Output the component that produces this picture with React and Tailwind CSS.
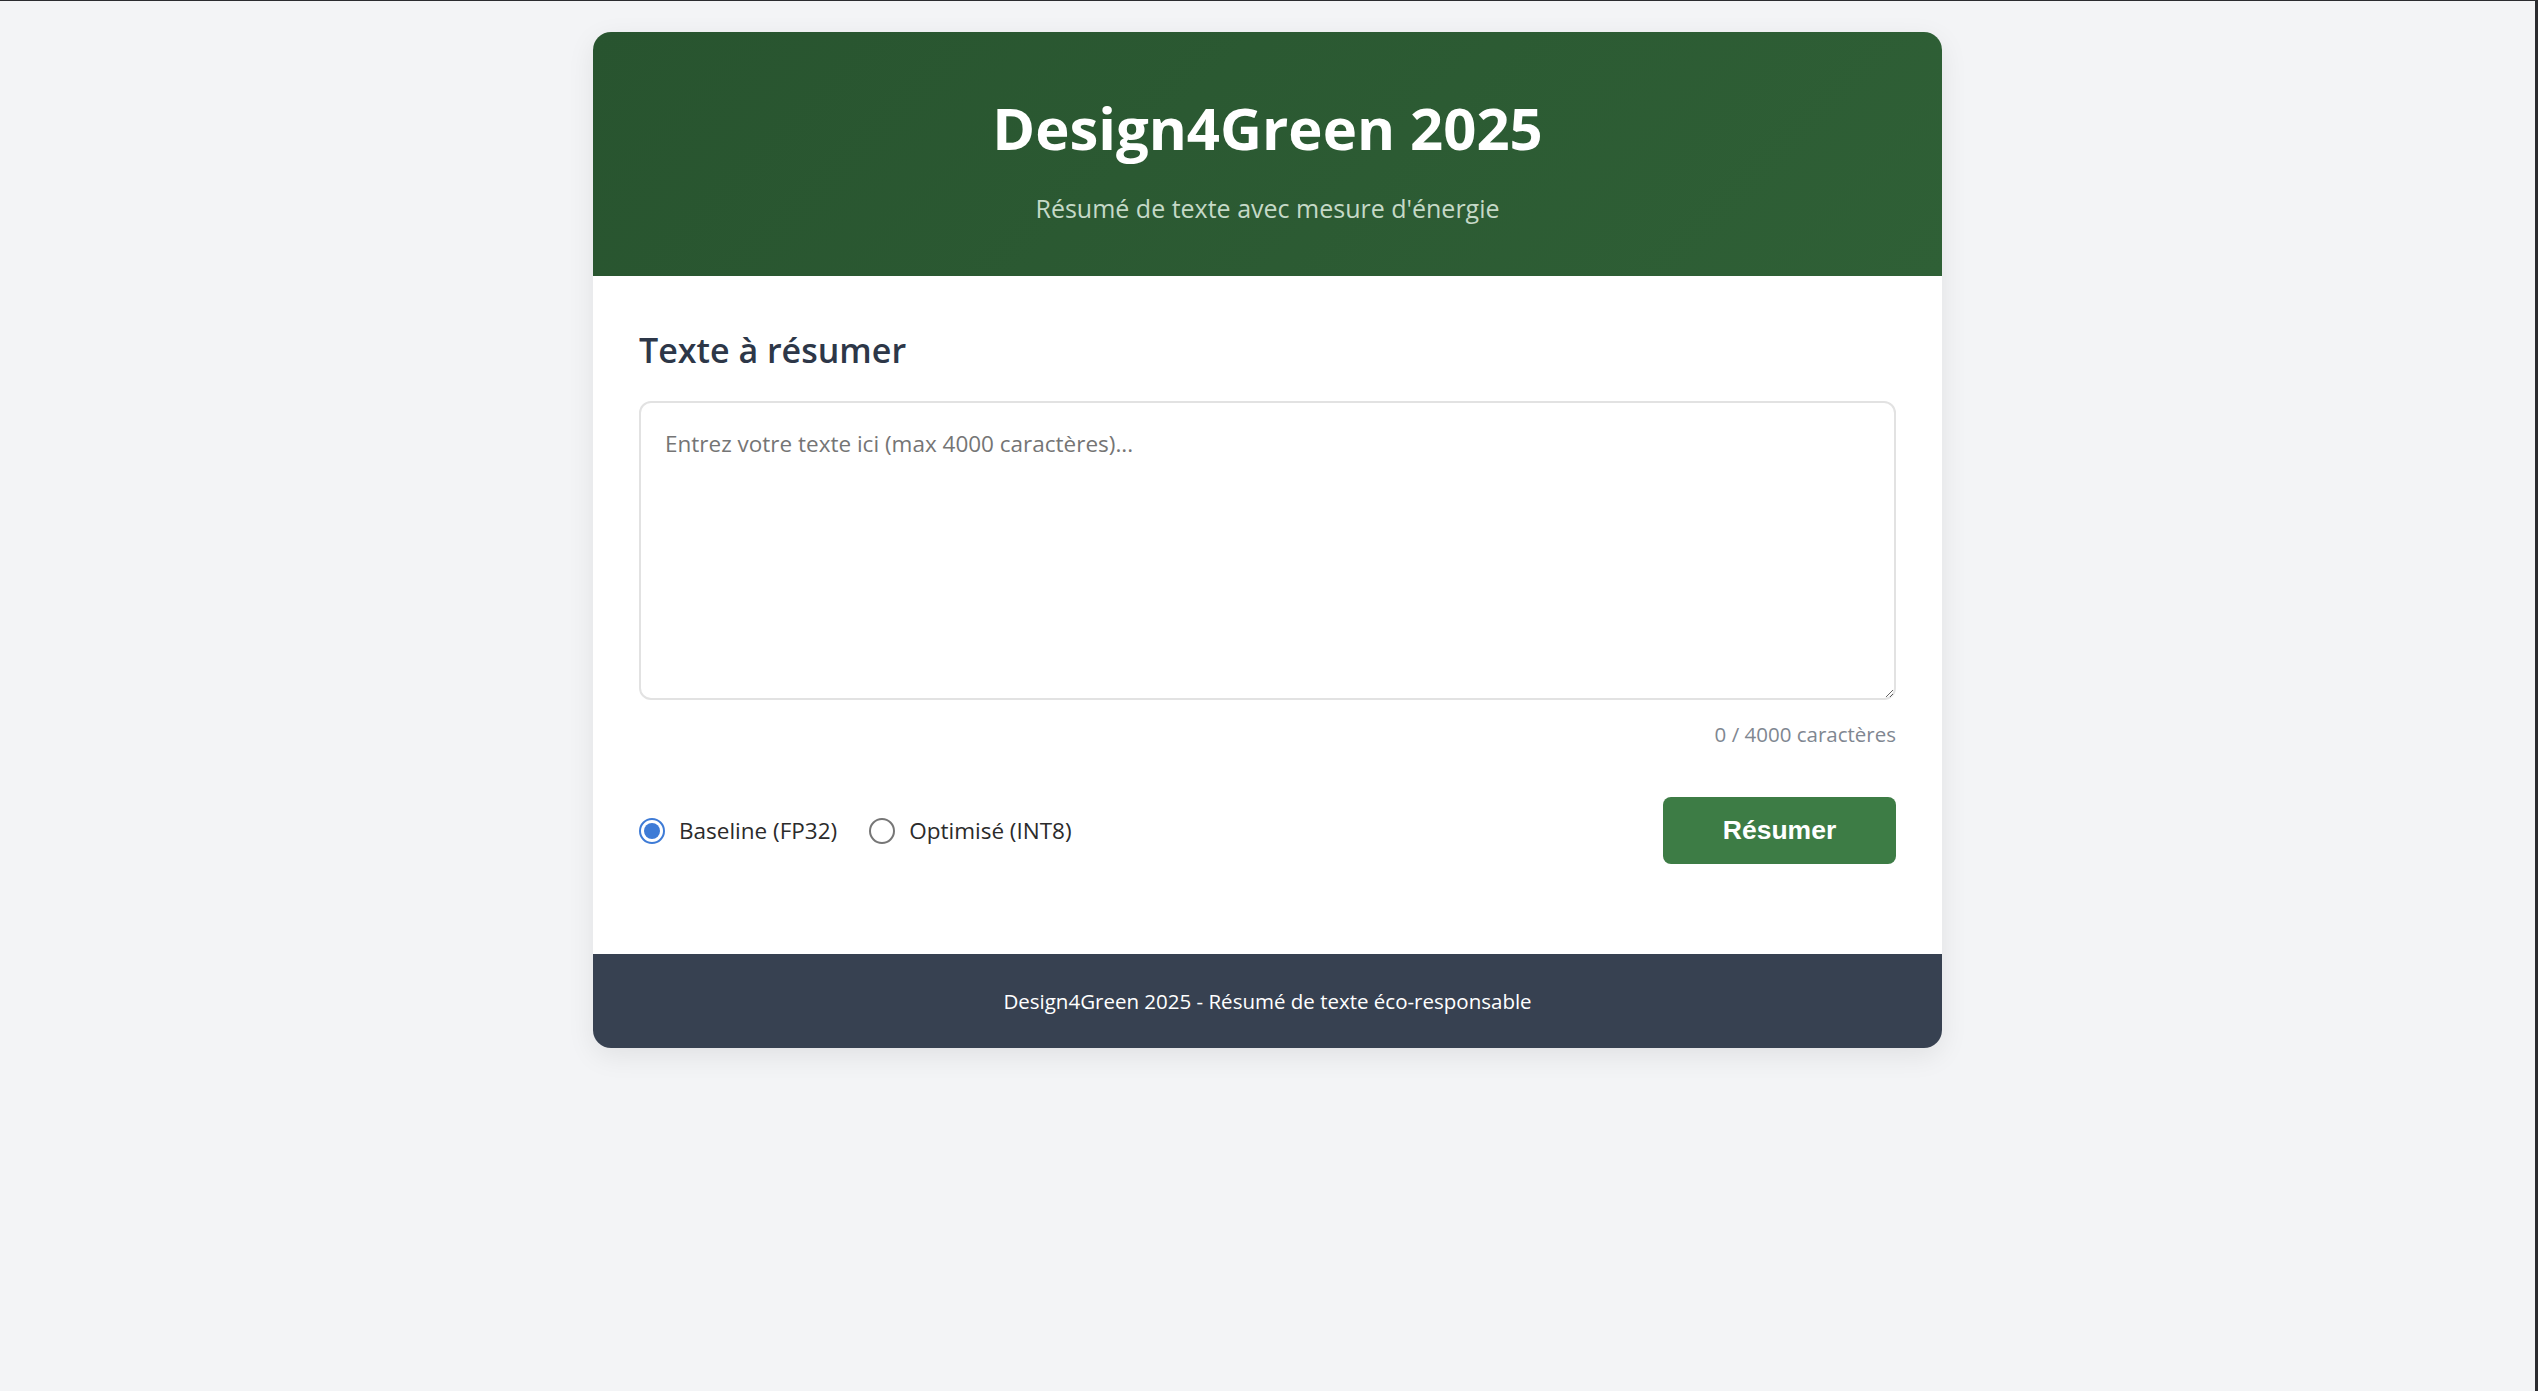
export default function App() {
  return (
    <div className="min-h-screen bg-[#f3f4f6] border-t border-r-[3px] border-[#2b2c30] font-['Open_Sans',sans-serif]">
      <div className="pt-[31px] pb-[40px]">
        <div className="mx-auto w-[1349px] rounded-[18px] bg-white shadow-[0_8px_28px_rgba(0,0,0,0.08)] overflow-hidden">
          <header className="bg-[linear-gradient(135deg,#28542f,#2f6036)] text-center pt-[60px] pb-[49px]">
            <h1 className="text-[58px] leading-[72px] font-bold text-white">Design4Green 2025</h1>
            <p className="mt-[26px] text-[25px] leading-[37px] text-[#c5d9c7]">Résumé de texte avec mesure d'énergie</p>
          </header>
          <main className="px-[46px] pt-[53px] pb-[90px]">
            <h2 className="text-[34px] leading-[43px] font-semibold text-[#2d3748]">Texte à résumer</h2>
            <textarea
              className="mt-[29px] block w-full h-[299px] rounded-[12px] border-2 border-[#e2e2e2] px-[24px] pt-[23px] pb-[20px] text-[22.5px] leading-[36px] text-[#333] placeholder:text-[#757575] resize-y outline-none"
              placeholder="Entrez votre texte ici (max 4000 caractères)..."
            />
            <div className="mt-[18px] text-right text-[20.5px] leading-[32px] text-[#7f8791]">0 / 4000 caractères</div>
            <div className="mt-[47px] flex items-center justify-between">
              <div className="flex items-center gap-[32px] text-[22.5px] text-[#2b2b2b]">
                <label className="flex items-center gap-[14px]">
                  <span className="flex items-center justify-center w-[26px] h-[26px] rounded-full border-2 border-[#3e7bd6] bg-white">
                    <span className="w-[16px] h-[16px] rounded-full bg-[#3e7bd6]" />
                  </span>
                  <span>Baseline (FP32)</span>
                </label>
                <label className="flex items-center gap-[14px]">
                  <span className="w-[26px] h-[26px] rounded-full border-2 border-[#767676] bg-white" />
                  <span>Optimisé (INT8)</span>
                </label>
              </div>
              <button className="w-[233px] h-[67px] rounded-[8px] bg-[#3d7c45] text-white font-bold text-[26.5px] font-['Liberation_Sans',sans-serif]">
                Résumer
              </button>
            </div>
          </main>
          <footer className="bg-[#374151] h-[94px] flex items-center justify-center text-white text-[20.5px]">
            Design4Green 2025 - Résumé de texte éco-responsable
          </footer>
        </div>
      </div>
    </div>
  );
}
